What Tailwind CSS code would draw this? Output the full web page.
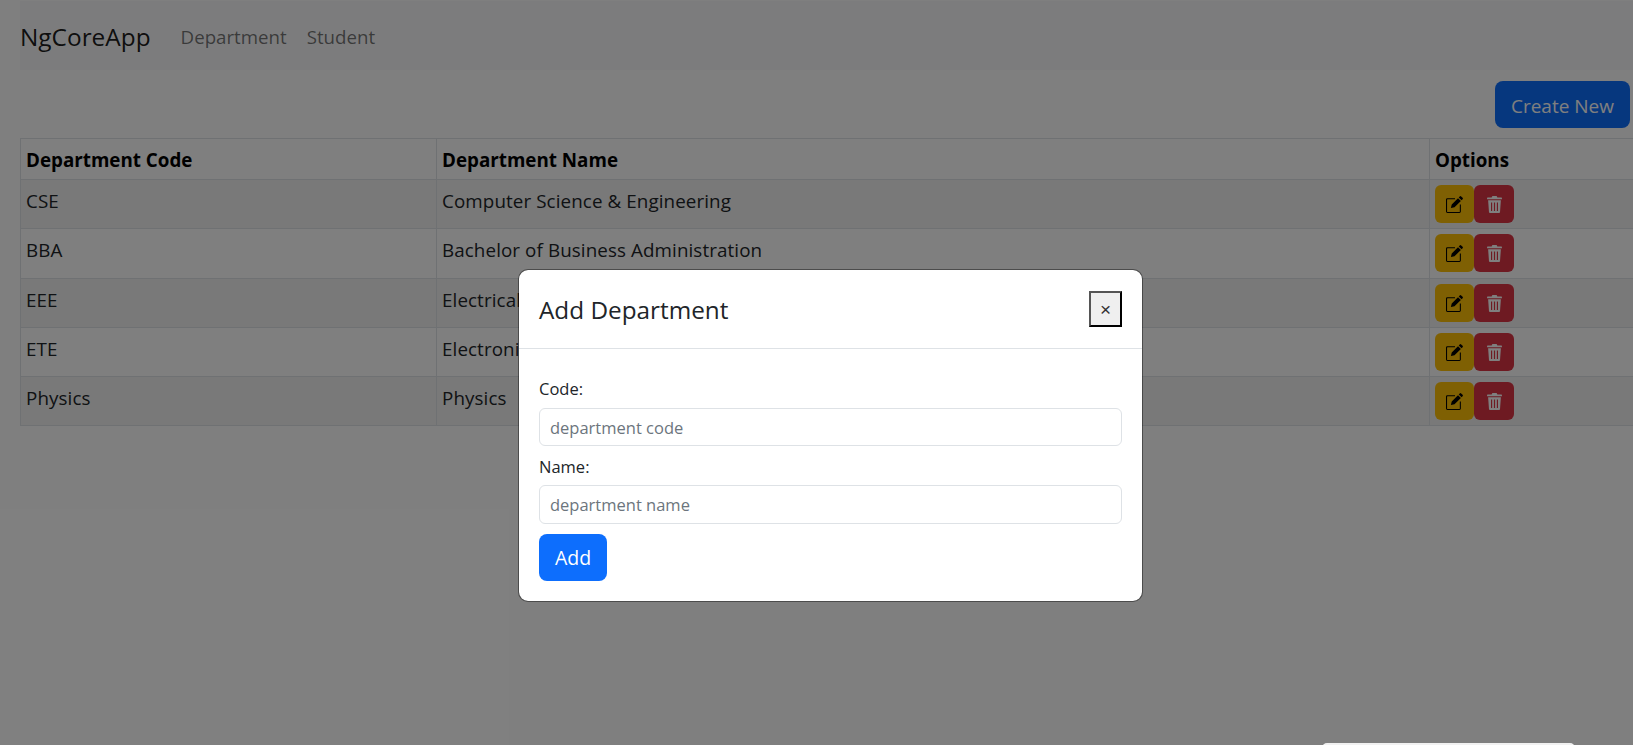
<!DOCTYPE html>
<html lang="en">
<head>
  <meta charset="UTF-8">
  <script src="https://cdn.jsdelivr.net/npm/@tailwindcss/browser@4"></script>
  <title>NgCoreApp</title>
</head>
<body class="bg-white font-['Open_Sans',sans-serif] text-[#212529] h-[745px] overflow-hidden relative">
  <nav class="ml-[20px] mt-px h-[69px] bg-[#f8f9fa] flex items-center pt-[3px]">
    <a class="text-[24.4px] text-black/90">NgCoreApp</a>
    <a class="ml-[30px] text-[18.7px] text-black/55">Department</a>
    <a class="ml-[20px] text-[18.7px] text-black/55">Student</a>
  </nav>
  <div class="flex justify-end mt-[11px] mr-[3px]">
    <button class="w-[135px] h-[47px] pt-[3px] rounded-[8px] bg-[#0d6efd] text-white text-[19px]">Create New</button>
  </div>
  <table class="ml-[20px] mt-[10px] w-[1640px] border-collapse text-[18.8px] tracking-[0.1px] table-fixed">
    <thead>
      <tr class="h-[41px] font-bold text-left text-black tracking-normal">
        <th class="w-[416px] border border-[#dee2e6] px-[5px] pt-[3px]">Department Code</th>
        <th class="w-[993px] border border-[#dee2e6] px-[5px] pt-[3px]">Department Name</th>
        <th class="border border-[#dee2e6] px-[5px] pt-[3px]">Options</th>
      </tr>
    </thead>
    <tbody>
      <tr class="h-[49px] bg-black/5">
        <td class="border border-[#dee2e6] px-[5px] pb-[6px]">CSE</td>
        <td class="border border-[#dee2e6] px-[5px] pb-[6px]">Computer Science &amp; Engineering</td>
        <td class="border border-[#dee2e6] px-[5px]">
          <div class="flex">
            <button class="w-[39px] h-[38px] rounded-[6px] bg-[#ffc107] flex items-center justify-center"><svg class="w-[17px] h-[17px]" viewBox="0 0 16 16" fill="#000"><path d="M15.600 1.700 14.300.4a1 1 0 0 0-1.400 0l-.9.9 2.700 2.700.9-.9a1 1 0 0 0 0-1.400zM11.300 2 5.400 8 4.600 11.400 8 10.600l6-5.900z"/><path d="M1.300 2A1.300 1.300 0 0 0 0 3.300v11.400A1.300 1.300 0 0 0 1.300 16h11.400a1.300 1.300 0 0 0 1.300-1.300V8h-1v6.500a.5.500 0 0 1-.5.500H1.500a.5.500 0 0 1-.5-.5V3.500a.5.500 0 0 1 .5-.5H8.500V2z"/></svg></button>
            <button class="w-[40px] h-[38px] rounded-[6px] bg-[#dc3545] flex items-center justify-center"><svg class="w-[15px] h-[17px]" viewBox="0 0 14 16" fill="#fff"><path d="M5 0h4l.7 1.500H13.500a.5.500 0 0 1 .5.500v1H0V2a.5.500 0 0 1 .5-.5H4.300zM1 4h12l-.8 11a1 1 0 0 1-1 1H2.800a1 1 0 0 1-1-1zm2.700 2v8h1.100V6zm2.750 0v8h1.100V6zm2.750 0v8h1.100V6z" fill-rule="evenodd"/></svg></button>
          </div>
        </td>
      </tr>
      <tr class="h-[50px]">
        <td class="border border-[#dee2e6] px-[5px] pb-[6px]">BBA</td>
        <td class="border border-[#dee2e6] px-[5px] pb-[6px]">Bachelor of Business Administration</td>
        <td class="border border-[#dee2e6] px-[5px]">
          <div class="flex mb-px">
            <button class="w-[39px] h-[38px] rounded-[6px] bg-[#ffc107] flex items-center justify-center"><svg class="w-[17px] h-[17px]" viewBox="0 0 16 16" fill="#000"><path d="M15.600 1.700 14.300.4a1 1 0 0 0-1.400 0l-.9.9 2.700 2.700.9-.9a1 1 0 0 0 0-1.400zM11.300 2 5.400 8 4.600 11.400 8 10.600l6-5.900z"/><path d="M1.300 2A1.300 1.300 0 0 0 0 3.300v11.400A1.300 1.300 0 0 0 1.300 16h11.400a1.300 1.300 0 0 0 1.300-1.300V8h-1v6.500a.5.500 0 0 1-.5.500H1.500a.5.500 0 0 1-.5-.5V3.500a.5.500 0 0 1 .5-.5H8.500V2z"/></svg></button>
            <button class="w-[40px] h-[38px] rounded-[6px] bg-[#dc3545] flex items-center justify-center"><svg class="w-[15px] h-[17px]" viewBox="0 0 14 16" fill="#fff"><path d="M5 0h4l.7 1.500H13.500a.5.500 0 0 1 .5.500v1H0V2a.5.500 0 0 1 .5-.5H4.300zM1 4h12l-.8 11a1 1 0 0 1-1 1H2.800a1 1 0 0 1-1-1zm2.700 2v8h1.100V6zm2.750 0v8h1.100V6zm2.750 0v8h1.100V6z" fill-rule="evenodd"/></svg></button>
          </div>
        </td>
      </tr>
      <tr class="h-[49px] bg-black/5">
        <td class="border border-[#dee2e6] px-[5px] pb-[6px]">EEE</td>
        <td class="border border-[#dee2e6] px-[5px] pb-[6px]">Electrical &amp; Electronic Engineering</td>
        <td class="border border-[#dee2e6] px-[5px]">
          <div class="flex">
            <button class="w-[39px] h-[38px] rounded-[6px] bg-[#ffc107] flex items-center justify-center"><svg class="w-[17px] h-[17px]" viewBox="0 0 16 16" fill="#000"><path d="M15.600 1.700 14.300.4a1 1 0 0 0-1.400 0l-.9.9 2.700 2.700.9-.9a1 1 0 0 0 0-1.400zM11.300 2 5.400 8 4.600 11.400 8 10.600l6-5.900z"/><path d="M1.300 2A1.300 1.300 0 0 0 0 3.300v11.400A1.300 1.300 0 0 0 1.300 16h11.400a1.300 1.300 0 0 0 1.300-1.300V8h-1v6.500a.5.500 0 0 1-.5.500H1.500a.5.500 0 0 1-.5-.5V3.500a.5.500 0 0 1 .5-.5H8.500V2z"/></svg></button>
            <button class="w-[40px] h-[38px] rounded-[6px] bg-[#dc3545] flex items-center justify-center"><svg class="w-[15px] h-[17px]" viewBox="0 0 14 16" fill="#fff"><path d="M5 0h4l.7 1.500H13.500a.5.500 0 0 1 .5.500v1H0V2a.5.500 0 0 1 .5-.5H4.300zM1 4h12l-.8 11a1 1 0 0 1-1 1H2.800a1 1 0 0 1-1-1zm2.700 2v8h1.100V6zm2.750 0v8h1.100V6zm2.750 0v8h1.100V6z" fill-rule="evenodd"/></svg></button>
          </div>
        </td>
      </tr>
      <tr class="h-[49px]">
        <td class="border border-[#dee2e6] px-[5px] pb-[6px]">ETE</td>
        <td class="border border-[#dee2e6] px-[5px] pb-[6px]">Electronics &amp; Telecommunication</td>
        <td class="border border-[#dee2e6] px-[5px]">
          <div class="flex">
            <button class="w-[39px] h-[38px] rounded-[6px] bg-[#ffc107] flex items-center justify-center"><svg class="w-[17px] h-[17px]" viewBox="0 0 16 16" fill="#000"><path d="M15.600 1.700 14.300.4a1 1 0 0 0-1.400 0l-.9.9 2.700 2.700.9-.9a1 1 0 0 0 0-1.400zM11.300 2 5.400 8 4.600 11.400 8 10.600l6-5.900z"/><path d="M1.300 2A1.300 1.300 0 0 0 0 3.300v11.400A1.300 1.300 0 0 0 1.300 16h11.400a1.300 1.300 0 0 0 1.300-1.300V8h-1v6.500a.5.500 0 0 1-.5.500H1.500a.5.500 0 0 1-.5-.5V3.500a.5.500 0 0 1 .5-.5H8.500V2z"/></svg></button>
            <button class="w-[40px] h-[38px] rounded-[6px] bg-[#dc3545] flex items-center justify-center"><svg class="w-[15px] h-[17px]" viewBox="0 0 14 16" fill="#fff"><path d="M5 0h4l.7 1.500H13.500a.5.500 0 0 1 .5.500v1H0V2a.5.500 0 0 1 .5-.5H4.300zM1 4h12l-.8 11a1 1 0 0 1-1 1H2.800a1 1 0 0 1-1-1zm2.700 2v8h1.100V6zm2.750 0v8h1.100V6zm2.750 0v8h1.100V6z" fill-rule="evenodd"/></svg></button>
          </div>
        </td>
      </tr>
      <tr class="h-[49px] bg-black/5">
        <td class="border border-[#dee2e6] px-[5px] pb-[6px]">Physics</td>
        <td class="border border-[#dee2e6] px-[5px] pb-[6px]">Physics</td>
        <td class="border border-[#dee2e6] px-[5px]">
          <div class="flex">
            <button class="w-[39px] h-[38px] rounded-[6px] bg-[#ffc107] flex items-center justify-center"><svg class="w-[17px] h-[17px]" viewBox="0 0 16 16" fill="#000"><path d="M15.600 1.700 14.300.4a1 1 0 0 0-1.400 0l-.9.9 2.700 2.700.9-.9a1 1 0 0 0 0-1.400zM11.300 2 5.400 8 4.600 11.400 8 10.600l6-5.900z"/><path d="M1.300 2A1.300 1.300 0 0 0 0 3.300v11.400A1.300 1.300 0 0 0 1.300 16h11.400a1.300 1.300 0 0 0 1.300-1.300V8h-1v6.500a.5.500 0 0 1-.5.500H1.500a.5.500 0 0 1-.5-.5V3.500a.5.500 0 0 1 .5-.5H8.500V2z"/></svg></button>
            <button class="w-[40px] h-[38px] rounded-[6px] bg-[#dc3545] flex items-center justify-center"><svg class="w-[15px] h-[17px]" viewBox="0 0 14 16" fill="#fff"><path d="M5 0h4l.7 1.500H13.500a.5.500 0 0 1 .5.500v1H0V2a.5.500 0 0 1 .5-.5H4.300zM1 4h12l-.8 11a1 1 0 0 1-1 1H2.800a1 1 0 0 1-1-1zm2.700 2v8h1.100V6zm2.750 0v8h1.100V6zm2.750 0v8h1.100V6z" fill-rule="evenodd"/></svg></button>
          </div>
        </td>
      </tr>
    </tbody>
  </table>

  <!-- backdrop + modal -->
  <div class="absolute inset-0 bg-black/50"></div>
  <div class="absolute left-[518px] top-[269px] w-[625px] h-[333px] bg-white bg-clip-padding rounded-[10px] border border-black/40 flex flex-col">
    <div class="h-[79px] border-b border-[#dee2e6] flex items-center justify-between px-[20px]">
      <h5 class="text-[24.3px] font-medium pt-[2px]">Add Department</h5>
      <button class="w-[33px] h-[36px] bg-[#efefef] border-2 border-t-[#555] border-l-[#555] border-r-black border-b-black font-['Liberation_Sans',sans-serif] text-[19px] leading-none text-[#333]">×</button>
    </div>
    <div class="px-[20px] pt-[28px] text-[16.5px]">
      <label class="block leading-[24px]">Code:</label>
      <input class="block w-full h-[38px] mt-[7px] px-[10px] border border-[#dee2e6] rounded-[6px] placeholder:text-[#6c757d] outline-none" placeholder="department code">
      <label class="block leading-[24px] mt-[9px]">Name:</label>
      <input class="block w-full h-[39px] mt-[6px] px-[10px] border border-[#dee2e6] rounded-[6px] placeholder:text-[#6c757d] outline-none" placeholder="department name">
      <button class="block w-[68px] h-[47px] mt-[10px] pt-px rounded-[8px] bg-[#0d6efd] text-white text-[19.5px]">Add</button>
    </div>
  </div>
  <div class="absolute left-[1322px] top-[743px] w-[253px] h-[20px] bg-[#f1f1f1] rounded-t-[5px]"></div>
</body>
</html>
